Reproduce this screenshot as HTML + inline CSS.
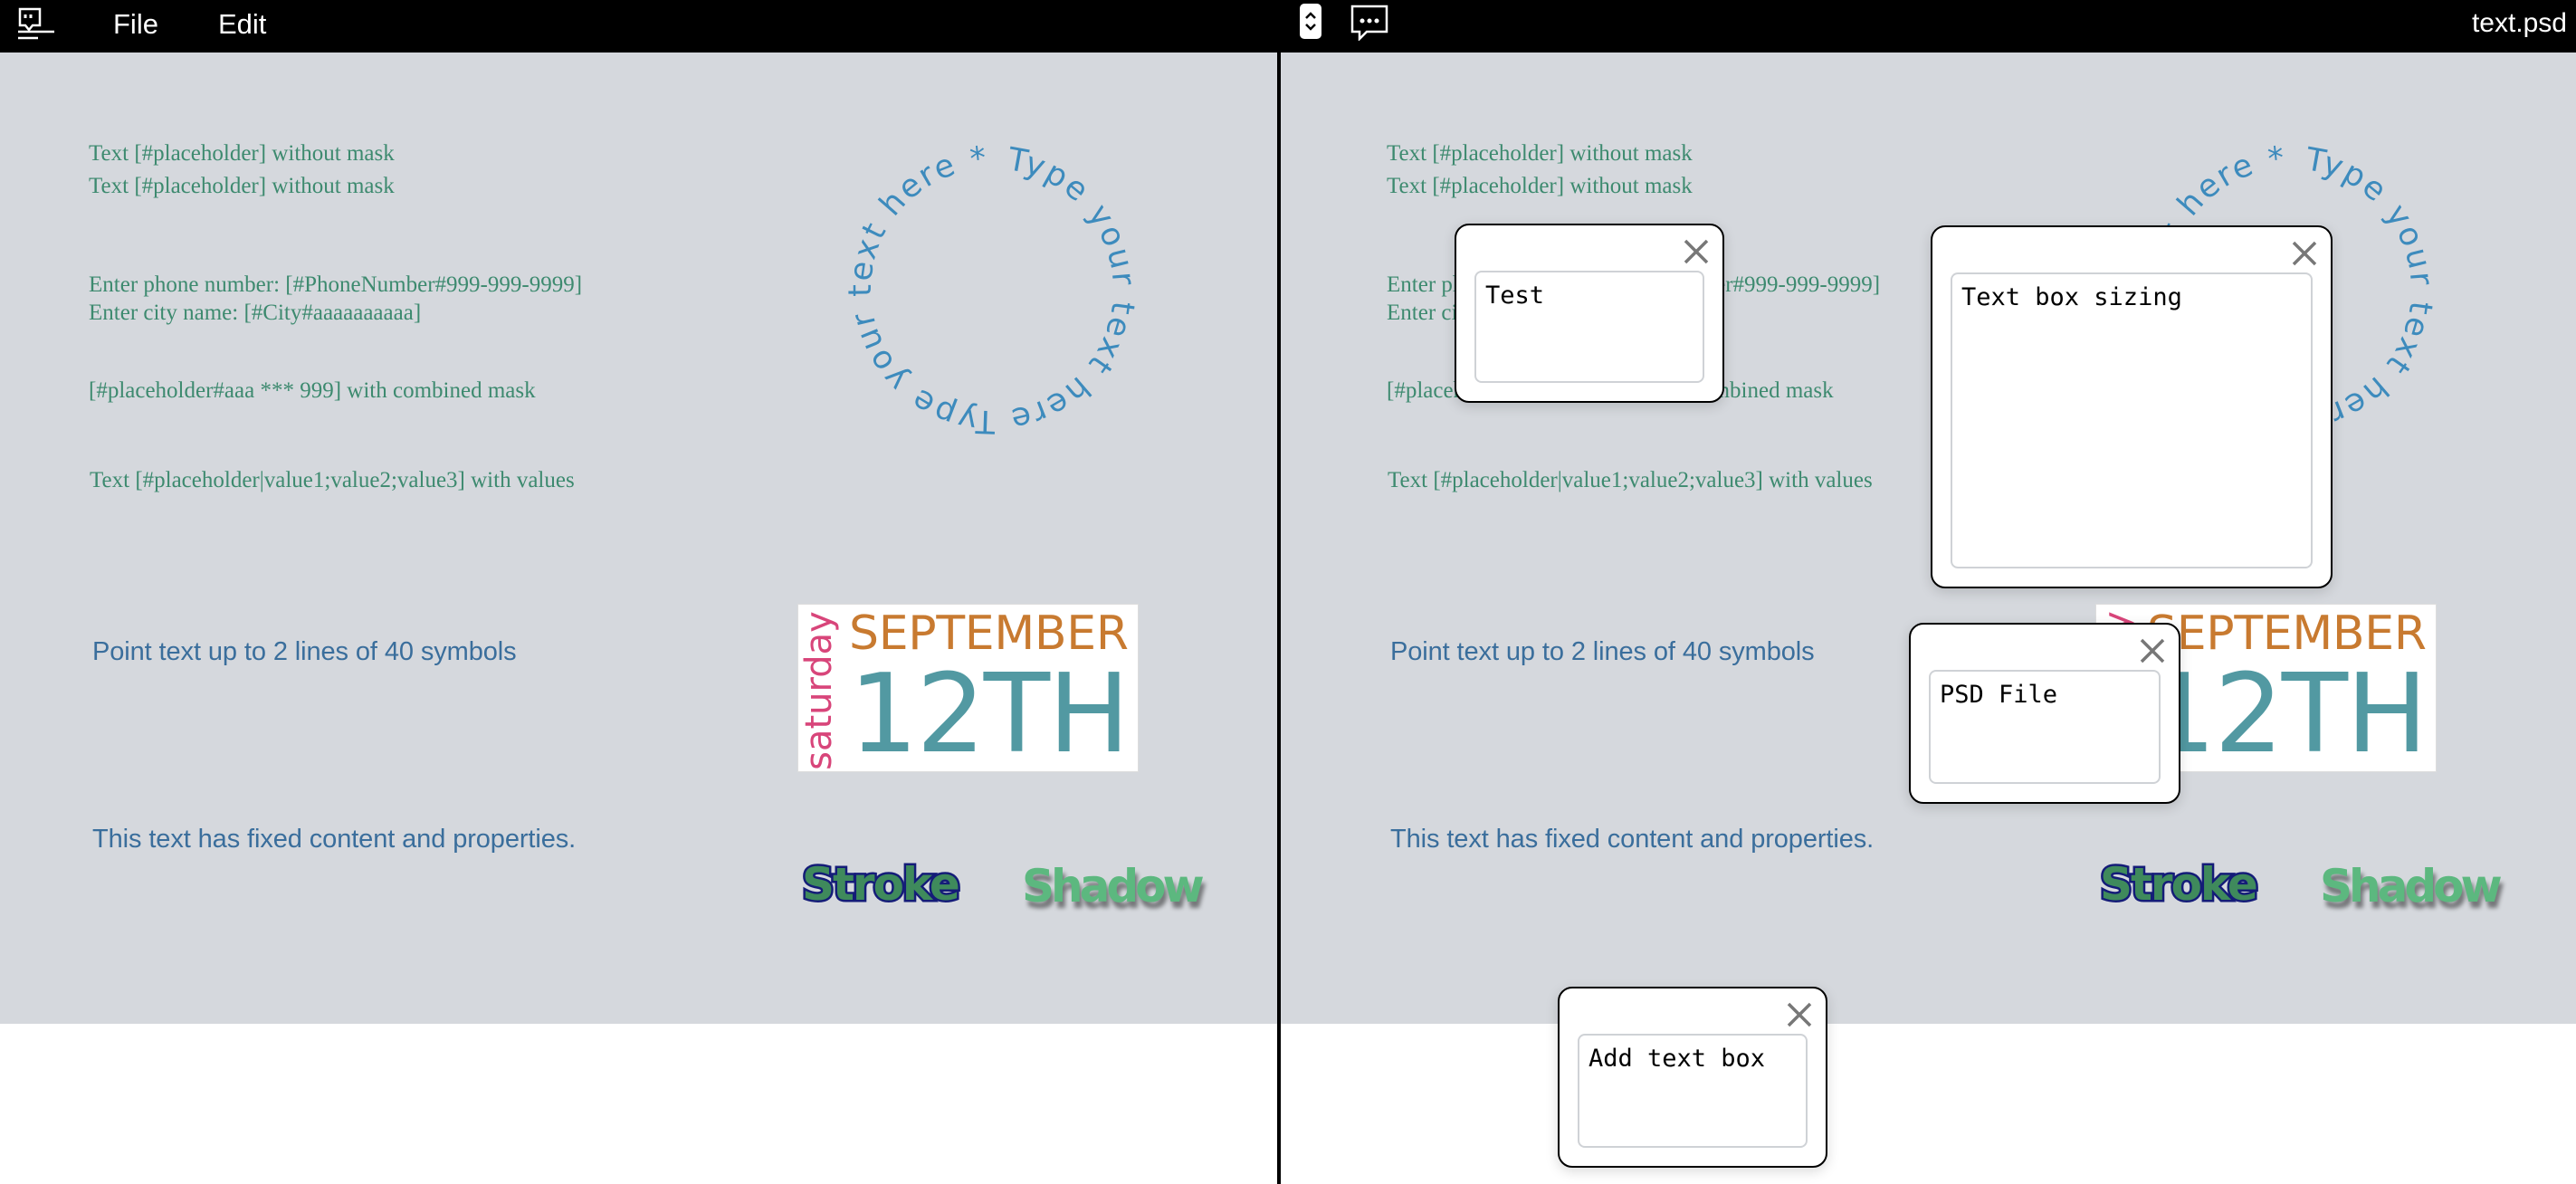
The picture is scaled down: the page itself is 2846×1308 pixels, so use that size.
<!DOCTYPE html>
<html><head><meta charset="utf-8"><style>
*{margin:0;padding:0;box-sizing:border-box}
body{width:2846px;height:1308px;overflow:hidden;background:#fff;position:relative;font-family:"Liberation Sans",sans-serif}
.bar{position:absolute;left:0;top:0;width:2846px;height:58px;background:#000;color:#fff}
.grey{position:absolute;top:58px;height:1073px;background:#d5d8dd}
.div{position:absolute;left:1411px;top:0;width:4px;height:1308px;background:#000}
.a{position:absolute;white-space:nowrap}
.s{font-family:"Liberation Serif",serif;font-size:25px;color:#3d8a6f}
.p{font-family:"Liberation Sans",sans-serif;font-size:29px;color:#3a6e9c;letter-spacing:-0.1px}
.cal{position:absolute;width:377px;height:186px;background:#fff;border:1px solid #ddd;overflow:hidden;font-family:"DejaVu Sans",sans-serif}
.pop{position:absolute;background:#fff;border:2px solid #000;border-radius:16px;box-shadow:0 4px 14px rgba(0,0,0,.15)}
.ta{position:absolute;left:20px;top:50px;right:20px;bottom:20px;border:2px solid #cfd2d6;border-radius:8px;font-family:"DejaVu Sans Mono","Liberation Mono",monospace;font-size:27px;color:#000;padding:10px 10px}
.x{position:absolute;top:14px;right:14px;width:30px;height:30px}
.stroke{font-family:"DejaVu Sans",sans-serif;font-weight:bold;font-size:50px;letter-spacing:-2px;color:#3f8a5c;-webkit-text-stroke:5px #141c78;paint-order:stroke fill}
.shadow{font-family:"DejaVu Sans",sans-serif;font-weight:bold;font-size:50px;letter-spacing:-4px;color:#5cb87f;text-shadow:3px 7px 5px rgba(0,0,0,.45)}
</style></head><body>
<div class="bar">
<svg style="position:absolute;left:18px;top:8px" width="44" height="36" viewBox="0 0 44 36" fill="none" stroke="#fff" stroke-width="2.5"><path d="M4 2h22v18h-8l-4 5-4-5H4z"/><path d="M10 8v4M16 8v4" stroke-width="3"/><path d="M2 27h40M2 34h22"/></svg>
<div class="a" style="left:125px;top:9px;font-size:31px">File</div>
<div class="a" style="left:241px;top:9px;font-size:31px">Edit</div>
<div style="position:absolute;left:1436px;top:4px;width:24px;height:39px;background:#fff;border-radius:5px"></div>
<svg style="position:absolute;left:1436px;top:4px" width="24" height="39" viewBox="0 0 24 39" fill="none" stroke="#000" stroke-width="2.5"><path d="M7 16l5-5 5 5M7 23l5 5 5-5"/></svg>
<svg style="position:absolute;left:1492px;top:5px" width="42" height="40" viewBox="0 0 42 40" fill="none" stroke="#fff" stroke-width="2.5"><path d="M2 2h38v28H18l-8 8v-8H2z"/><circle cx="13" cy="18" r="1.3" fill="#fff"/><circle cx="21" cy="18" r="1.3" fill="#fff"/><circle cx="29" cy="18" r="1.3" fill="#fff"/></svg>
<div class="a" style="right:10px;top:9px;font-size:30px">text.psd</div>
</div>
<div class="grey" style="left:0;width:1411px"></div>
<div class="grey" style="left:1415px;width:1431px"></div>
<div class="div"></div>

<div class="a s" style="left:98px;top:156px">Text [#placeholder] without mask</div>
<div class="a s" style="left:98px;top:192px">Text [#placeholder] without mask</div>
<div class="a s" style="left:98px;top:301px">Enter phone number: [#PhoneNumber#999-999-9999]</div>
<div class="a s" style="left:98px;top:332px">Enter city name: [#City#aaaaaaaaaa]</div>
<div class="a s" style="left:98px;top:418px">[#placeholder#aaa *** 999] with combined mask</div>
<div class="a s" style="left:99px;top:517px">Text [#placeholder|value1;value2;value3] with values</div>
<div class="a p" style="left:102px;top:704px">Point text up to 2 lines of 40 symbols</div>
<div class="a p" style="left:102px;top:911px">This text has fixed content and properties.</div>

<div class="a s" style="left:1532px;top:156px">Text [#placeholder] without mask</div>
<div class="a s" style="left:1532px;top:192px">Text [#placeholder] without mask</div>
<div class="a s" style="left:1532px;top:301px">Enter phone number: [#PhoneNumber#999-999-9999]</div>
<div class="a s" style="left:1532px;top:332px">Enter city name: [#City#aaaaaaaaaa]</div>
<div class="a s" style="left:1532px;top:418px">[#placeholder#aaa *** 999] with combined mask</div>
<div class="a s" style="left:1533px;top:517px">Text [#placeholder|value1;value2;value3] with values</div>
<div class="a p" style="left:1536px;top:704px">Point text up to 2 lines of 40 symbols</div>
<div class="a p" style="left:1536px;top:911px">This text has fixed content and properties.</div>

<svg style="position:absolute;left:0;top:0" width="2846" height="1308">
<defs>
<path id="c1" d="M1096 186 A134 134 0 1 1 1096 454 A134 134 0 1 1 1096 186"/>
<path id="c2" d="M2530 186 A134 134 0 1 1 2530 454 A134 134 0 1 1 2530 186"/>
</defs>
<text font-family="DejaVu Sans,sans-serif" font-size="35" fill="#3d8bbd"><textPath href="#c1" startOffset="16" textLength="820">Type your text here  Type your text here *</textPath></text>
<text font-family="DejaVu Sans,sans-serif" font-size="35" fill="#3d8bbd"><textPath href="#c2" startOffset="16" textLength="820">Type your text here  Type your text here *</textPath></text>
</svg>

<div class="cal" style="left:881px;top:667px">
<div class="a" style="left:56px;top:2px;font-size:52px;color:#c87a30;letter-spacing:-0.3px">SEPTEMBER</div>
<div class="a" style="left:56px;top:52px;font-size:120px;color:#5299a2;letter-spacing:-2px">12TH</div>
<div class="a" style="left:-67px;top:72px;font-size:40px;color:#d8457a;transform:rotate(-90deg);width:180px;text-align:center">saturday</div>
</div>
<div class="cal" style="left:2315px;top:667px">
<div class="a" style="left:56px;top:2px;font-size:52px;color:#c87a30;letter-spacing:-0.3px">SEPTEMBER</div>
<div class="a" style="left:56px;top:52px;font-size:120px;color:#5299a2;letter-spacing:-2px">12TH</div>
<div class="a" style="left:-67px;top:72px;font-size:40px;color:#d8457a;transform:rotate(-90deg);width:180px;text-align:center">saturday</div>
</div>

<div class="a stroke" style="left:886px;top:948px">Stroke</div>
<div class="a shadow" style="left:1129px;top:950px">Shadow</div>
<div class="a stroke" style="left:2320px;top:948px">Stroke</div>
<div class="a shadow" style="left:2563px;top:950px">Shadow</div>

<div class="pop" style="left:1607px;top:247px;width:298px;height:198px"><svg class="x" viewBox="0 0 30 30" stroke="#777" stroke-width="3.5"><path d="M3 3l24 24M27 3L3 27"/></svg><div class="ta">Test</div></div>
<div class="pop" style="left:2133px;top:249px;width:444px;height:401px"><svg class="x" viewBox="0 0 30 30" stroke="#777" stroke-width="3.5"><path d="M3 3l24 24M27 3L3 27"/></svg><div class="ta">Text box sizing</div></div>
<div class="pop" style="left:2109px;top:688px;width:300px;height:200px"><svg class="x" viewBox="0 0 30 30" stroke="#777" stroke-width="3.5"><path d="M3 3l24 24M27 3L3 27"/></svg><div class="ta">PSD File</div></div>
<div class="pop" style="left:1721px;top:1090px;width:298px;height:200px"><svg class="x" viewBox="0 0 30 30" stroke="#777" stroke-width="3.5"><path d="M3 3l24 24M27 3L3 27"/></svg><div class="ta">Add text box</div></div>
</body></html>
